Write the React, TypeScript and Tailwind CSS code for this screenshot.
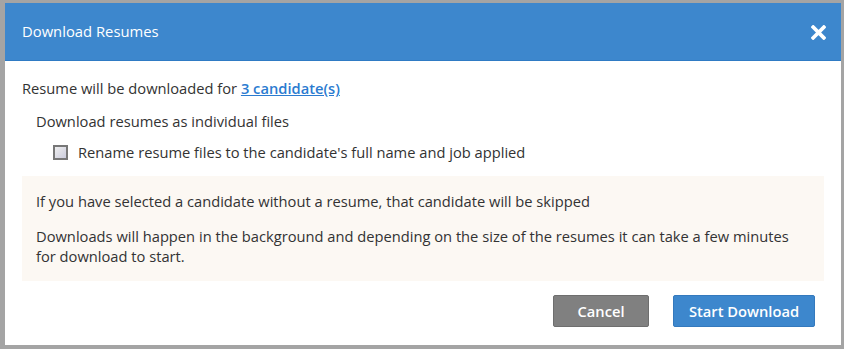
import React from "react";

export default function App() {
  return (
    <div
      className="w-[844px] h-[349px] bg-[#a4a4a4] pt-[3px] pl-[5px]"
      style={{ fontFamily: '"Open Sans", sans-serif' }}
    >
      <div className="w-[836px] h-[342px] bg-white flex flex-col">
        <div className="h-[58px] bg-[#3d87cd] border-b border-[#2f7bc4] flex items-center justify-between pl-[17px] pr-[15px]">
          <span className="text-white text-[14.8px]">Download Resumes</span>
          <svg width="15" height="15" viewBox="0 0 14 14" className="mt-[1px]">
            <path d="M2 2 L12 12 M12 2 L2 12" stroke="white" strokeWidth="3.4" strokeLinecap="square" />
          </svg>
        </div>
        <div className="px-[17px] pt-[17px] text-[14.7px] text-[#333]">
          <div className="leading-[20px]">
            Resume will be downloaded for{" "}
            <a className="text-[#2b7bd0] font-semibold underline">3 candidate(s)</a>
          </div>
          <div className="pl-[14px] mt-[13px] leading-[20px]">Download resumes as individual files</div>
          <label className="flex items-center pl-[31px] mt-[11px] leading-[20px]">
            <span className="w-[15px] h-[15px] border-2 border-[#777] bg-gradient-to-br from-[#eee] to-[#ccd] mr-[10px]" />
            Rename resume files to the candidate's full name and job applied
          </label>
          <div className="mt-[14px] bg-[#fcf8f3] pl-[14px] pr-[14px] pt-[15px] pb-[15px] leading-[20px]">
            <div>If you have selected a candidate without a resume, that candidate will be skipped</div>
            <div className="mt-[15px]">
              Downloads will happen in the background and depending on the size of the resumes it can take a few minutes for download to start.
            </div>
          </div>
          <div className="flex justify-end mt-[14px] pr-[9px] gap-[24px]">
            <button className="w-[96px] h-[32px] rounded-[2px] bg-[#808080] border border-[#6e6e6e] text-white font-semibold text-[14.7px]">
              Cancel
            </button>
            <button className="w-[142px] h-[32px] rounded-[2px] bg-[#3d87cd] border border-[#3479bd] text-white font-semibold text-[14.7px]">
              Start Download
            </button>
          </div>
        </div>
      </div>
    </div>
  );
}
